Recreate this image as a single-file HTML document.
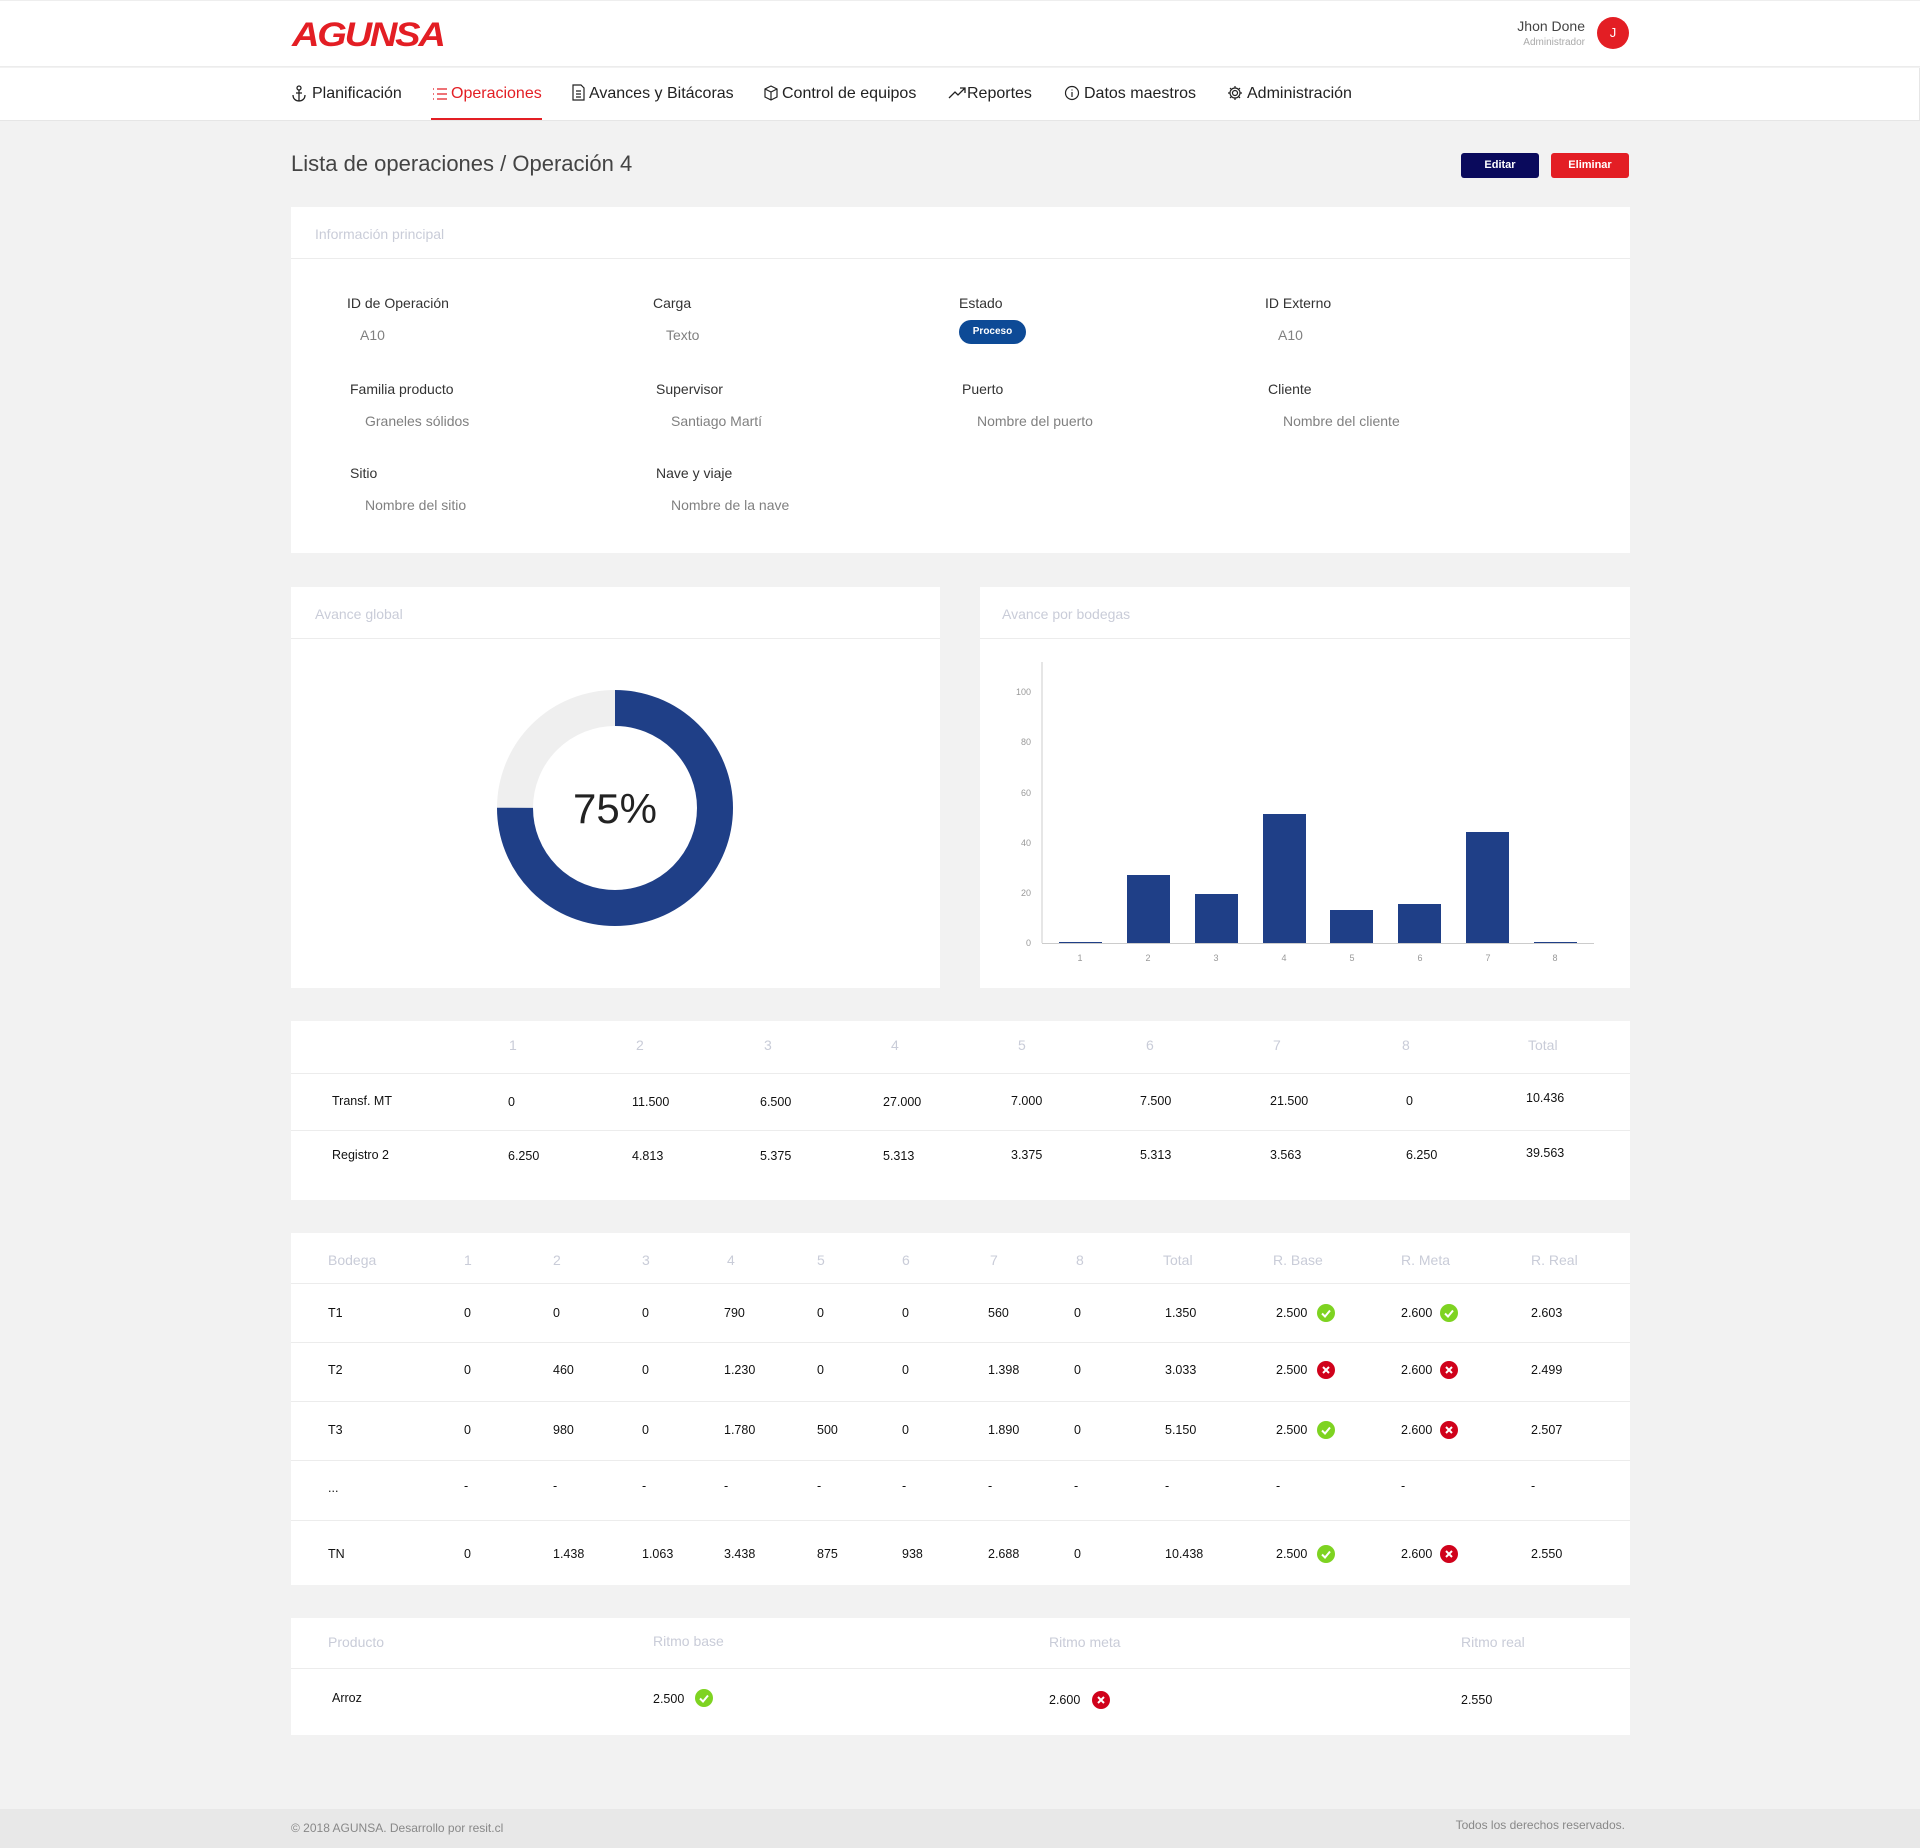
<!DOCTYPE html>
<html><head><meta charset="utf-8"><style>
*{margin:0;padding:0;box-sizing:border-box}
body{width:1920px;height:1848px;background:#f2f2f2;font-family:"Liberation Sans",sans-serif;position:relative;overflow:hidden;color:#222}
.a{position:absolute;white-space:nowrap}
.t{position:absolute;white-space:nowrap;line-height:20px}
.card{position:absolute;background:#fff}
.hl{position:absolute;height:1px;background:#ececec}
.ch{color:#c9ccd8;font-size:14px}
.lb{font-size:14px;color:#333;top-offset:0}
.vl{font-size:14px;color:#808080}
.th{font-size:14px;color:#c9ccd8}
.td{font-size:12.5px;color:#111}
.nav{font-size:16px;color:#222;top:84px}
</style></head><body>
<div class="a" style="left:0;top:0;width:1920px;height:67px;background:#fff;border-bottom:1px solid #ececec;border-top:1px solid #eee"></div>
<div class="a" style="left:0;top:68px;width:1920px;height:53px;background:#fff;border-bottom:1px solid #e6e6e6;border-right:1px solid #e6e6e6"></div>
<div class="a" style="left:292px;top:15px;font-size:34px;font-weight:bold;font-style:italic;color:#e31e24;letter-spacing:-2px;transform:scaleX(1.12);transform-origin:left;line-height:40px">AGUNSA</div>
<div class="t" style="right:335px;top:16px;font-size:14px;color:#444">Jhon Done</div>
<div class="t" style="right:335px;top:33px;font-size:10px;color:#aaa">Administrador</div>
<div class="a" style="left:1597px;top:17px;width:32px;height:32px;border-radius:50%;background:#e31e24;color:#fff;font-size:13px;text-align:center;line-height:32px">J</div>
<svg class="a" style="left:291px;top:85px" width="16" height="17" viewBox="0 0 16 17" fill="none" stroke="#222" stroke-width="1.3"><circle cx="8" cy="3" r="2"/><path d="M8 5v11M2 10c0 4 3 6 6 6s6-2 6-6M5 8h6"/></svg>
<div class="t nav" style="left:312px">Planificación</div>
<svg class="a" style="left:432px;top:87px" width="16" height="14" viewBox="0 0 16 14" fill="none" stroke="#e31e24" stroke-width="1.3"><path d="M1 2h1M1 7h1M1 12h1M5 2h10M5 7h10M5 12h10"/></svg>
<div class="t nav" style="left:451px;color:#e31e24">Operaciones</div>
<div class="a" style="left:431px;top:118px;width:111px;height:2px;background:#e31e24"></div>
<svg class="a" style="left:572px;top:84px" width="13" height="17" viewBox="0 0 13 17" fill="none" stroke="#222" stroke-width="1.2"><path d="M1 1h8l3 3v12H1zM4 7h5M4 10h5M4 13h5"/></svg>
<div class="t nav" style="left:589px">Avances y Bitácoras</div>
<svg class="a" style="left:763px;top:85px" width="16" height="16" viewBox="0 0 16 16" fill="none" stroke="#222" stroke-width="1.2"><path d="M8 1l6 3v8l-6 3-6-3V4zM2 4l6 3 6-3M8 7v8"/></svg>
<div class="t nav" style="left:782px">Control de equipos</div>
<svg class="a" style="left:948px;top:87px" width="18" height="12" viewBox="0 0 18 12" fill="none" stroke="#222" stroke-width="1.3"><path d="M1 11l6-6 3 3 7-7M12 1h5v5"/></svg>
<div class="t nav" style="left:967px">Reportes</div>
<svg class="a" style="left:1064px;top:85px" width="16" height="16" viewBox="0 0 16 16" fill="none" stroke="#222" stroke-width="1.2"><circle cx="8" cy="8" r="6.5"/><path d="M8 7v5M8 4.5v1"/></svg>
<div class="t nav" style="left:1084px">Datos maestros</div>
<svg class="a" style="left:1227px;top:85px" width="16" height="16" viewBox="0 0 16 16" fill="none" stroke="#222" stroke-width="1.2"><circle cx="8" cy="8" r="2.5"/><path d="M8 1v2M8 13v2M1 8h2M13 8h2M3 3l1.5 1.5M11.5 11.5L13 13M3 13l1.5-1.5M11.5 4.5L13 3"/><circle cx="8" cy="8" r="5"/></svg>
<div class="t nav" style="left:1247px">Administración</div>
<div class="a" style="left:291px;top:151px;font-size:22px;color:#444;line-height:26px">Lista de operaciones / Operación 4</div>
<div class="a" style="left:1461px;top:153px;width:78px;height:25px;border-radius:3px;background:#0a0a5c;color:#fff;font-size:11px;font-weight:bold;text-align:center;line-height:25px">Editar</div>
<div class="a" style="left:1551px;top:153px;width:78px;height:25px;border-radius:3px;background:#e31e24;color:#fff;font-size:11px;font-weight:bold;text-align:center;line-height:25px">Eliminar</div>
<div class="card" style="left:291px;top:207px;width:1339px;height:346px"></div>
<div class="hl" style="left:291px;top:258px;width:1339px"></div>
<div class="t ch" style="left:315px;top:224px">Información principal</div>
<div class="t lb" style="left:347px;top:293px">ID de Operación</div>
<div class="t vl" style="left:360px;top:325px">A10</div>
<div class="t lb" style="left:653px;top:293px">Carga</div>
<div class="t vl" style="left:666px;top:325px">Texto</div>
<div class="t lb" style="left:959px;top:293px">Estado</div>
<div class="a" style="left:959px;top:320px;width:67px;height:24px;border-radius:12px;background:#0d4a96;color:#fff;font-size:10px;font-weight:bold;text-align:center;line-height:24px">Proceso</div>
<div class="t lb" style="left:1265px;top:293px">ID Externo</div>
<div class="t vl" style="left:1278px;top:325px">A10</div>
<div class="t lb" style="left:350px;top:379px">Familia producto</div>
<div class="t vl" style="left:365px;top:411px">Graneles sólidos</div>
<div class="t lb" style="left:656px;top:379px">Supervisor</div>
<div class="t vl" style="left:671px;top:411px">Santiago Martí</div>
<div class="t lb" style="left:962px;top:379px">Puerto</div>
<div class="t vl" style="left:977px;top:411px">Nombre del puerto</div>
<div class="t lb" style="left:1268px;top:379px">Cliente</div>
<div class="t vl" style="left:1283px;top:411px">Nombre del cliente</div>
<div class="t lb" style="left:350px;top:463px">Sitio</div>
<div class="t vl" style="left:365px;top:495px">Nombre del sitio</div>
<div class="t lb" style="left:656px;top:463px">Nave y viaje</div>
<div class="t vl" style="left:671px;top:495px">Nombre de la nave</div>
<div class="card" style="left:291px;top:587px;width:649px;height:401px"></div>
<div class="hl" style="left:291px;top:638px;width:649px"></div>
<div class="t ch" style="left:315px;top:604px">Avance global</div>
<svg class="a" style="left:497px;top:690px" width="236" height="236" viewBox="0 0 236 236">
<circle cx="118" cy="118" r="100" fill="none" stroke="#efefef" stroke-width="36"/>
<circle cx="118" cy="118" r="100" fill="none" stroke="#1f3f87" stroke-width="36" stroke-dasharray="471.24 628.32" transform="rotate(-90 118 118)"/>
<text x="118" y="133" text-anchor="middle" font-family="Liberation Sans" font-size="42" fill="#222">75%</text>
</svg>
<div class="card" style="left:980px;top:587px;width:650px;height:401px"></div>
<div class="hl" style="left:980px;top:638px;width:650px"></div>
<div class="t ch" style="left:1002px;top:604px">Avance por bodegas</div>
<svg class="a" style="left:980px;top:640px" width="650" height="340" viewBox="980 640 650 340" font-family="Liberation Sans" font-size="9" fill="#999">
<line x1="1042" y1="662" x2="1042" y2="943" stroke="#ccc"/>
<line x1="1042" y1="943.5" x2="1594" y2="943.5" stroke="#ccc"/>
<g text-anchor="end"><text x="1031" y="695">100</text><text x="1031" y="745">80</text><text x="1031" y="796">60</text><text x="1031" y="846">40</text><text x="1031" y="896">20</text><text x="1031" y="946">0</text></g>
<g fill="#1f3f87">
<rect x="1059" y="942" width="43" height="1"/>
<rect x="1127" y="875" width="43" height="68"/>
<rect x="1195" y="894" width="43" height="49"/>
<rect x="1263" y="814" width="43" height="129"/>
<rect x="1330" y="910" width="43" height="33"/>
<rect x="1398" y="904" width="43" height="39"/>
<rect x="1466" y="832" width="43" height="111"/>
<rect x="1534" y="942" width="43" height="1"/>
</g>
<g text-anchor="middle"><text x="1080" y="961">1</text><text x="1148" y="961">2</text><text x="1216" y="961">3</text><text x="1284" y="961">4</text><text x="1352" y="961">5</text><text x="1420" y="961">6</text><text x="1488" y="961">7</text><text x="1555" y="961">8</text></g>
</svg>
<div class="card" style="left:291px;top:1021px;width:1339px;height:179px"></div>
<div class="hl" style="left:291px;top:1073px;width:1339px"></div>
<div class="hl" style="left:291px;top:1130px;width:1339px"></div>
<div class="t th" style="left:509px;top:1035px">1</div><div class="t th" style="left:636px;top:1035px">2</div><div class="t th" style="left:764px;top:1035px">3</div><div class="t th" style="left:891px;top:1035px">4</div><div class="t th" style="left:1018px;top:1035px">5</div><div class="t th" style="left:1146px;top:1035px">6</div><div class="t th" style="left:1273px;top:1035px">7</div><div class="t th" style="left:1402px;top:1035px">8</div><div class="t th" style="left:1528px;top:1035px">Total</div>
<div class="t td" style="left:332px;top:1091px">Transf. MT</div><div class="t td" style="left:508px;top:1092px">0</div><div class="t td" style="left:632px;top:1092px">11.500</div><div class="t td" style="left:760px;top:1092px">6.500</div><div class="t td" style="left:883px;top:1092px">27.000</div><div class="t td" style="left:1011px;top:1091px">7.000</div><div class="t td" style="left:1140px;top:1091px">7.500</div><div class="t td" style="left:1270px;top:1091px">21.500</div><div class="t td" style="left:1406px;top:1091px">0</div><div class="t td" style="left:1526px;top:1088px">10.436</div>
<div class="t td" style="left:332px;top:1145px">Registro 2</div><div class="t td" style="left:508px;top:1146px">6.250</div><div class="t td" style="left:632px;top:1146px">4.813</div><div class="t td" style="left:760px;top:1146px">5.375</div><div class="t td" style="left:883px;top:1146px">5.313</div><div class="t td" style="left:1011px;top:1145px">3.375</div><div class="t td" style="left:1140px;top:1145px">5.313</div><div class="t td" style="left:1270px;top:1145px">3.563</div><div class="t td" style="left:1406px;top:1145px">6.250</div><div class="t td" style="left:1526px;top:1143px">39.563</div>
<div class="card" style="left:291px;top:1233px;width:1339px;height:352px"></div>
<div class="hl" style="left:291px;top:1283px;width:1339px"></div>
<div class="hl" style="left:291px;top:1342px;width:1339px"></div>
<div class="hl" style="left:291px;top:1401px;width:1339px"></div>
<div class="hl" style="left:291px;top:1460px;width:1339px"></div>
<div class="hl" style="left:291px;top:1520px;width:1339px"></div>
<div class="card" style="left:291px;top:1618px;width:1339px;height:117px"></div>
<div class="hl" style="left:291px;top:1668px;width:1339px"></div>
<div class="t th" style="left:328px;top:1632px">Producto</div><div class="t th" style="left:653px;top:1631px">Ritmo base</div><div class="t th" style="left:1049px;top:1632px">Ritmo meta</div><div class="t th" style="left:1461px;top:1632px">Ritmo real</div>
<div class="t td" style="left:332px;top:1688px">Arroz</div>
<div class="t td" style="left:653px;top:1689px">2.500</div>
<svg class="a" style="left:695px;top:1689px" width="18" height="18" viewBox="0 0 18 18"><circle cx="9" cy="9" r="9" fill="#7ed321"/><path d="M5 9.5l3 3 5-6" fill="none" stroke="#fff" stroke-width="2"/></svg>
<div class="t td" style="left:1049px;top:1690px">2.600</div>
<svg class="a" style="left:1092px;top:1691px" width="18" height="18" viewBox="0 0 18 18"><circle cx="9" cy="9" r="9" fill="#d0021b"/><path d="M6 6l6 6M12 6l-6 6" stroke="#fff" stroke-width="2"/></svg>
<div class="t td" style="left:1461px;top:1690px">2.550</div>
<div class="a" style="left:0;top:1809px;width:1920px;height:39px;background:#e8e8e8"></div>
<div class="t" style="left:291px;top:1818px;font-size:12px;color:#888">© 2018 AGUNSA. Desarrollo por resit.cl</div>
<div class="t" style="right:295px;top:1815px;font-size:12px;color:#888">Todos los derechos reservados.</div>

<div class="t th" style="left:328px;top:1250px">Bodega</div><div class="t th" style="left:464px;top:1250px">1</div><div class="t th" style="left:553px;top:1250px">2</div><div class="t th" style="left:642px;top:1250px">3</div><div class="t th" style="left:727px;top:1250px">4</div><div class="t th" style="left:817px;top:1250px">5</div><div class="t th" style="left:902px;top:1250px">6</div><div class="t th" style="left:990px;top:1250px">7</div><div class="t th" style="left:1076px;top:1250px">8</div><div class="t th" style="left:1163px;top:1250px">Total</div><div class="t th" style="left:1273px;top:1250px">R. Base</div><div class="t th" style="left:1401px;top:1250px">R. Meta</div><div class="t th" style="left:1531px;top:1250px">R. Real</div>

<div class="t td" style="left:328px;top:1303px">T1</div><div class="t td" style="left:464px;top:1303px">0</div><div class="t td" style="left:553px;top:1303px">0</div><div class="t td" style="left:642px;top:1303px">0</div><div class="t td" style="left:724px;top:1303px">790</div><div class="t td" style="left:817px;top:1303px">0</div><div class="t td" style="left:902px;top:1303px">0</div><div class="t td" style="left:988px;top:1303px">560</div><div class="t td" style="left:1074px;top:1303px">0</div><div class="t td" style="left:1165px;top:1303px">1.350</div><div class="t td" style="left:1276px;top:1303px">2.500</div><div class="t td" style="left:1401px;top:1303px">2.600</div><div class="t td" style="left:1531px;top:1303px">2.603</div>
<div class="t td" style="left:328px;top:1360px">T2</div><div class="t td" style="left:464px;top:1360px">0</div><div class="t td" style="left:553px;top:1360px">460</div><div class="t td" style="left:642px;top:1360px">0</div><div class="t td" style="left:724px;top:1360px">1.230</div><div class="t td" style="left:817px;top:1360px">0</div><div class="t td" style="left:902px;top:1360px">0</div><div class="t td" style="left:988px;top:1360px">1.398</div><div class="t td" style="left:1074px;top:1360px">0</div><div class="t td" style="left:1165px;top:1360px">3.033</div><div class="t td" style="left:1276px;top:1360px">2.500</div><div class="t td" style="left:1401px;top:1360px">2.600</div><div class="t td" style="left:1531px;top:1360px">2.499</div>
<div class="t td" style="left:328px;top:1420px">T3</div><div class="t td" style="left:464px;top:1420px">0</div><div class="t td" style="left:553px;top:1420px">980</div><div class="t td" style="left:642px;top:1420px">0</div><div class="t td" style="left:724px;top:1420px">1.780</div><div class="t td" style="left:817px;top:1420px">500</div><div class="t td" style="left:902px;top:1420px">0</div><div class="t td" style="left:988px;top:1420px">1.890</div><div class="t td" style="left:1074px;top:1420px">0</div><div class="t td" style="left:1165px;top:1420px">5.150</div><div class="t td" style="left:1276px;top:1420px">2.500</div><div class="t td" style="left:1401px;top:1420px">2.600</div><div class="t td" style="left:1531px;top:1420px">2.507</div>
<div class="t td" style="left:328px;top:1478px">...</div><div class="t td" style="left:464px;top:1476px">-</div><div class="t td" style="left:553px;top:1476px">-</div><div class="t td" style="left:642px;top:1476px">-</div><div class="t td" style="left:724px;top:1476px">-</div><div class="t td" style="left:817px;top:1476px">-</div><div class="t td" style="left:902px;top:1476px">-</div><div class="t td" style="left:988px;top:1476px">-</div><div class="t td" style="left:1074px;top:1476px">-</div><div class="t td" style="left:1165px;top:1476px">-</div><div class="t td" style="left:1276px;top:1476px">-</div><div class="t td" style="left:1401px;top:1476px">-</div><div class="t td" style="left:1531px;top:1476px">-</div>
<div class="t td" style="left:328px;top:1544px">TN</div><div class="t td" style="left:464px;top:1544px">0</div><div class="t td" style="left:553px;top:1544px">1.438</div><div class="t td" style="left:642px;top:1544px">1.063</div><div class="t td" style="left:724px;top:1544px">3.438</div><div class="t td" style="left:817px;top:1544px">875</div><div class="t td" style="left:902px;top:1544px">938</div><div class="t td" style="left:988px;top:1544px">2.688</div><div class="t td" style="left:1074px;top:1544px">0</div><div class="t td" style="left:1165px;top:1544px">10.438</div><div class="t td" style="left:1276px;top:1544px">2.500</div><div class="t td" style="left:1401px;top:1544px">2.600</div><div class="t td" style="left:1531px;top:1544px">2.550</div>

<svg class="a" style="left:1317px;top:1304px" width="18" height="18" viewBox="0 0 18 18"><circle cx="9" cy="9" r="9" fill="#7ed321"/><path d="M5 9.5l3 3 5-6" fill="none" stroke="#fff" stroke-width="2"/></svg>
<svg class="a" style="left:1440px;top:1304px" width="18" height="18" viewBox="0 0 18 18"><circle cx="9" cy="9" r="9" fill="#7ed321"/><path d="M5 9.5l3 3 5-6" fill="none" stroke="#fff" stroke-width="2"/></svg>
<svg class="a" style="left:1317px;top:1361px" width="18" height="18" viewBox="0 0 18 18"><circle cx="9" cy="9" r="9" fill="#d0021b"/><path d="M6 6l6 6M12 6l-6 6" stroke="#fff" stroke-width="2"/></svg>
<svg class="a" style="left:1440px;top:1361px" width="18" height="18" viewBox="0 0 18 18"><circle cx="9" cy="9" r="9" fill="#d0021b"/><path d="M6 6l6 6M12 6l-6 6" stroke="#fff" stroke-width="2"/></svg>
<svg class="a" style="left:1317px;top:1421px" width="18" height="18" viewBox="0 0 18 18"><circle cx="9" cy="9" r="9" fill="#7ed321"/><path d="M5 9.5l3 3 5-6" fill="none" stroke="#fff" stroke-width="2"/></svg>
<svg class="a" style="left:1440px;top:1421px" width="18" height="18" viewBox="0 0 18 18"><circle cx="9" cy="9" r="9" fill="#d0021b"/><path d="M6 6l6 6M12 6l-6 6" stroke="#fff" stroke-width="2"/></svg>
<svg class="a" style="left:1317px;top:1545px" width="18" height="18" viewBox="0 0 18 18"><circle cx="9" cy="9" r="9" fill="#7ed321"/><path d="M5 9.5l3 3 5-6" fill="none" stroke="#fff" stroke-width="2"/></svg>
<svg class="a" style="left:1440px;top:1545px" width="18" height="18" viewBox="0 0 18 18"><circle cx="9" cy="9" r="9" fill="#d0021b"/><path d="M6 6l6 6M12 6l-6 6" stroke="#fff" stroke-width="2"/></svg>
</body></html>
